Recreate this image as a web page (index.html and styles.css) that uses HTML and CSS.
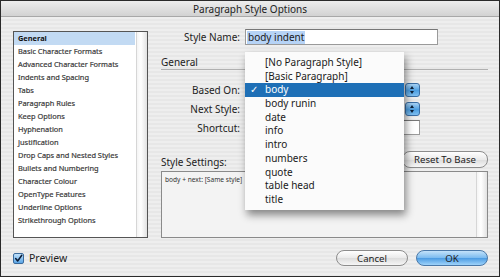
FILE: index.html
```html
<!DOCTYPE html>
<html lang="en">
<head>
  <meta charset="UTF-8" />
  <title>Paragraph Style Options</title>
  <link rel="stylesheet" href="styles.css">
</head>
<body>
  <div class="dialog">
    <div class="titlebar">Paragraph Style Options</div>

    <div class="main">
      <div class="sidebar">
        <ul class="cats">
          <li class="active">General</li>
          <li>Basic Character Formats</li>
          <li>Advanced Character Formats</li>
          <li>Indents and Spacing</li>
          <li>Tabs</li>
          <li>Paragraph Rules</li>
          <li>Keep Options</li>
          <li>Hyphenation</li>
          <li>Justification</li>
          <li>Drop Caps and Nested Styles</li>
          <li>Bullets and Numbering</li>
          <li>Character Colour</li>
          <li>OpenType Features</li>
          <li>Underline Options</li>
          <li>Strikethrough Options</li>
        </ul>
        <div class="track"></div>
      </div>

      <div class="panel">
        <div class="row name-row">
          <span class="lbl">Style Name:</span>
          <div class="field wide"><span class="sel">body indent</span></div>
        </div>

        <div class="section">General</div>

        <div class="row pop-row">
          <span class="lbl">Based On:</span>
          <div class="popup"><span class="stepper"></span></div>
        </div>
        <div class="row pop-row next">
          <span class="lbl">Next Style:</span>
          <div class="popup"><span class="stepper"></span></div>
        </div>
        <div class="row short-row">
          <span class="lbl">Shortcut:</span>
          <div class="field"></div>
        </div>

        <div class="settings-head">
          <span class="sub">Style Settings:</span>
          <button class="btn reset">Reset To Base</button>
        </div>
        <div class="settings-box">
          <span class="summary">body + next: [Same style]</span>
          <div class="track"></div>
        </div>
      </div>
    </div>

    <div class="footer">
      <label class="check">
        <span class="box">
          <svg width="11" height="11" viewBox="0 0 11 11"><path d="M2 5.5 L4.5 8.5 L9.5 1.5" fill="none" stroke="#0b1a33" stroke-width="1.8" stroke-linecap="round" stroke-linejoin="round"/></svg>
        </span>
        Preview
      </label>
      <div class="actions">
        <button class="btn">Cancel</button>
        <button class="btn ok">OK</button>
      </div>
    </div>

    <ul class="menu">
      <li>[No Paragraph Style]</li>
      <li>[Basic Paragraph]</li>
      <li class="on">body</li>
      <li>body runin</li>
      <li>date</li>
      <li>info</li>
      <li>intro</li>
      <li>numbers</li>
      <li>quote</li>
      <li>table head</li>
      <li>title</li>
    </ul>
  </div>
</body>
</html>
```

FILE: styles.css
```css
* { box-sizing: border-box; }
body { margin: 0; font-family: "Noto Sans", "DejaVu Sans", sans-serif; color: #1a1a1a; }

.dialog {
  position: relative;
  width: 500px; height: 277px;
  border: 1px solid #2a2a2a;
  background: repeating-linear-gradient(to bottom, #eeeeee 0, #eeeeee 2px, #e7e7e7 2px, #e7e7e7 4px);
  display: flex; flex-direction: column;
}

.titlebar {
  height: 16px; line-height: 16px;
  text-align: center; font-size: 10px; color: #222;
  background: linear-gradient(#ededed, #d2d2d2);
  border-bottom: 1px solid #a8a8a8;
}

.main { display: flex; padding: 12px 11px 0 12px; }

.sidebar {
  width: 135px; height: 207px; margin-top: 2px;
  border: 1px solid #555;
  background: #fff;
  display: flex;
}
.cats { list-style: none; margin: 0; padding: 0; flex: 1; }
.cats li {
  height: 13px; line-height: 13px;
  padding-left: 4px;
  font-size: 7.4px; color: #3c3c3c;
  white-space: nowrap;
  -webkit-text-stroke: 0.2px #3c3c3c;
}
.cats li.active { background: #c2daf3; color: #111; font-weight: 700; -webkit-text-stroke: 0; margin-right: 1px; }
.track {
  width: 11px;
  background: linear-gradient(to right, #f4f4f4, #ffffff 40%, #e2e2e2);
  border-left: 1px solid #d6d6d6;
}

.panel { margin-left: 13px; width: 327px; display: flex; flex-direction: column; }

.row { display: flex; align-items: center; }
.lbl { width: 79px; margin-right: 5px; text-align: right; font-size: 10px; color: #222; }

.field {
  width: 175px; height: 15px;
  background: #fff;
  border: 1px solid #9a9a9a;
  border-top-color: #777;
}
.field.wide { width: 193px; height: 16px; padding: 1px 1px; display: flex; align-items: center; }
.sel { background: #b6d3f6; font-size: 10px; line-height: 13px; padding: 0 1px; }

.section {
  margin-top: 11px; height: 14px; line-height: 13px;
  font-size: 10px; color: #222;
  border-bottom: 1px solid #b0b0b0;
}

.pop-row { margin-top: 13px; height: 14px; }
.pop-row.next { margin-top: 5px; }
.popup { width: 175px; height: 14px; display: flex; justify-content: flex-end; }
.stepper {
  width: 15px; height: 14px;
  border-radius: 3px;
  border: 1px solid #3a6ea5;
  background: linear-gradient(#a9d3f5, #4d9ee0 55%, #7fc0f2);
  position: relative;
}
.stepper::before, .stepper::after {
  content: ""; position: absolute; left: 4px;
  border-left: 2.5px solid transparent; border-right: 2.5px solid transparent;
}
.stepper::before { top: 2px; border-bottom: 3px solid #0d2038; }
.stepper::after { bottom: 2px; border-top: 3px solid #0d2038; }

.short-row { margin-top: 4px; }

.settings-head {
  margin-top: 16px;
  display: flex; justify-content: space-between; align-items: flex-end;
}
.sub { font-size: 10px; color: #222; line-height: 12px; }

.btn {
  font-family: inherit; font-size: 9.6px; color: #222;
  width: 72px; height: 16px; padding: 0;
  border: 1px solid #8c8c8c; border-radius: 8px;
  background: linear-gradient(#ffffff, #eaeaea 50%, #dcdcdc 51%, #f6f6f6);
}
.btn.reset { width: 86px; height: 17px; }
.btn.ok {
  border-color: #4a78a8;
  background: linear-gradient(#c3e2fa, #7dbcf0 48%, #4c9ce3 52%, #9fd3fa);
}

.settings-box {
  margin-top: 3px; height: 67px;
  border: 1px solid #8a8a8a;
  background: #f3f3f3;
  display: flex; justify-content: space-between;
}
.summary {
  width: 82px; height: 12px;
  font-size: 6.6px; color: #333;
  padding: 3px 0 0 3px;
  white-space: nowrap; overflow: hidden;
}
.settings-box .track { flex: none; }

.footer {
  display: flex; justify-content: space-between; align-items: center;
  padding: 12px 11px 0 12px;
}
.check { display: flex; align-items: center; gap: 5px; font-size: 10.5px; color: #222; }
.box {
  width: 11px; height: 11px;
  border: 1px solid #3b6b9c; border-radius: 2px;
  background: linear-gradient(#bfe0fa, #5aa5e6);
  display: flex;
}
.box svg { margin: -1px 0 0 0; }
.actions { display: flex; gap: 8px; }

.menu {
  position: absolute; left: 244px; top: 51px;
  width: 159px; height: 158px;
  margin: 0; padding: 4px 0 0;
  list-style: none;
  background: #fbfbfb;
  box-shadow: 2px 5px 8px rgba(0, 0, 0, 0.45);
}
.menu li {
  height: 13.7px; line-height: 13.7px;
  padding-left: 20px;
  font-size: 10px; color: #1a1a1a;
  position: relative;
}
.menu li.on { background: #1e6fb6; color: #fff; }
.menu li.on::before { content: "\2713"; position: absolute; left: 5px; }
```
